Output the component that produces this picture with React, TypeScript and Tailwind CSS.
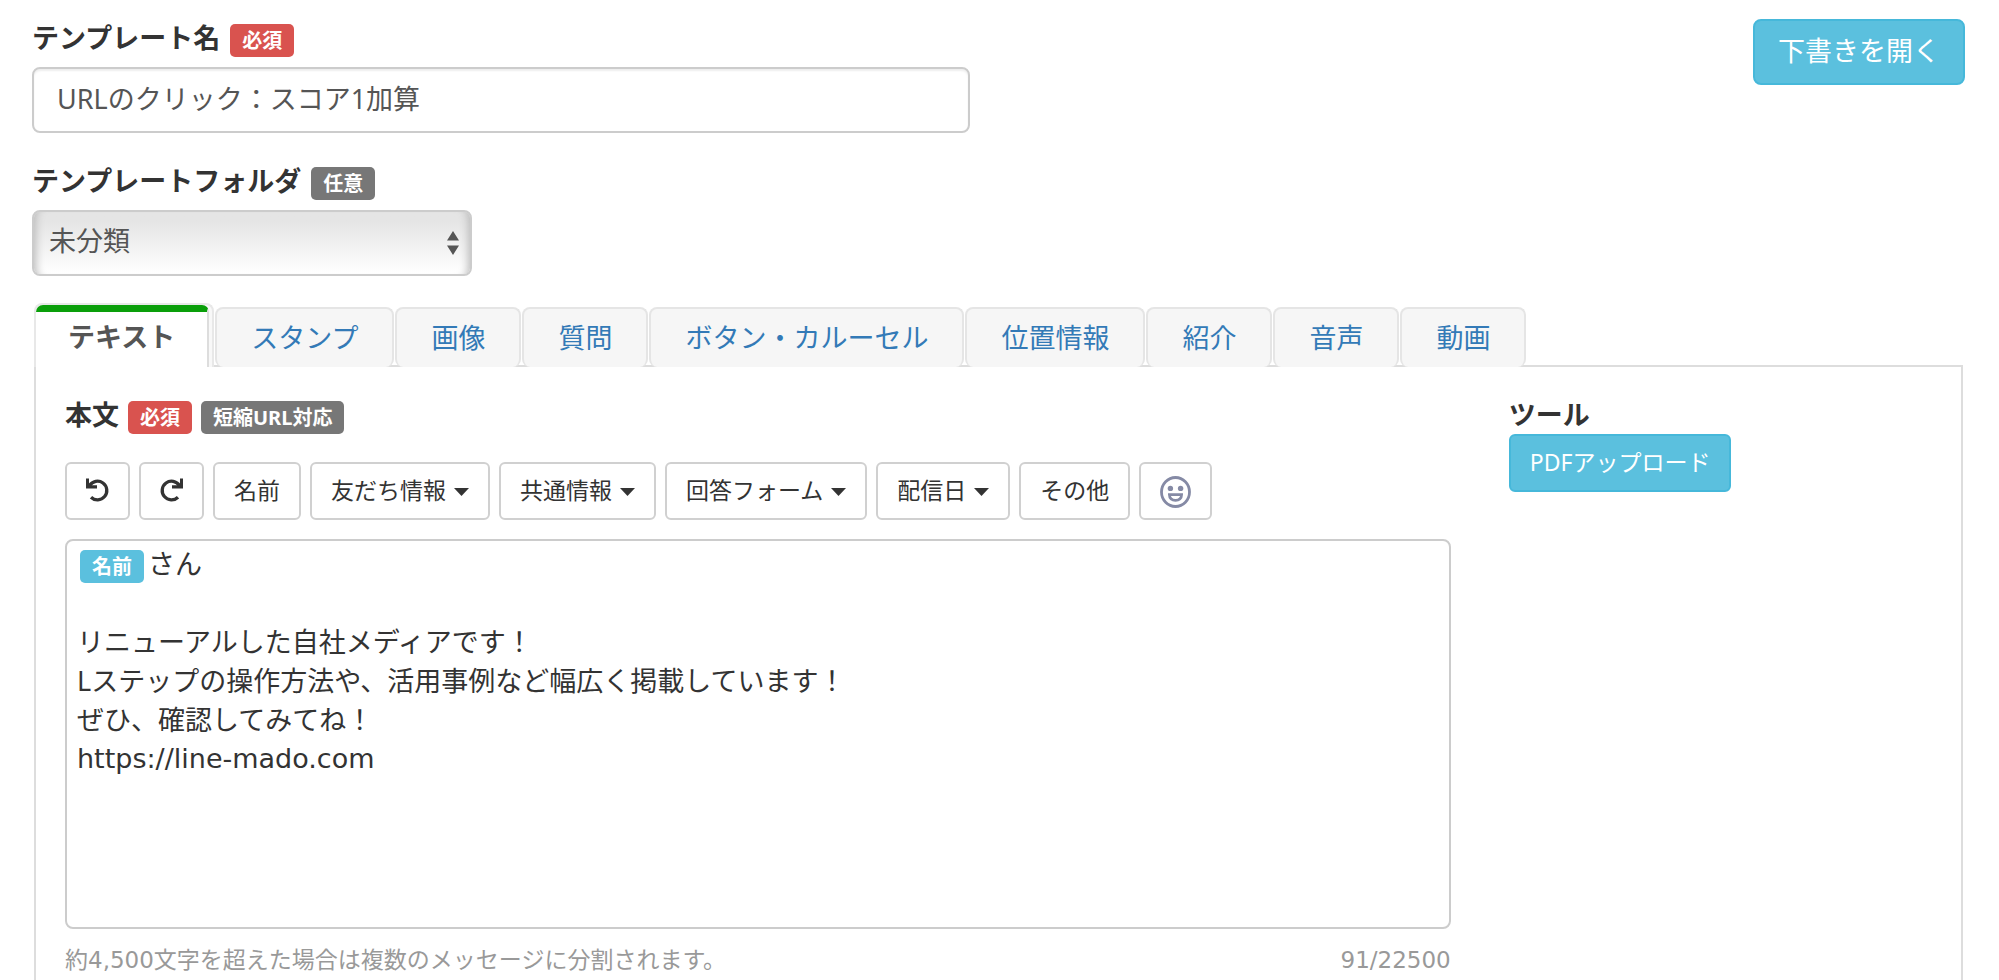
import { useState } from 'react';
import type { ReactNode } from 'react';

const TABS = [
  'テキスト',
  'スタンプ',
  '画像',
  '質問',
  'ボタン・カルーセル',
  '位置情報',
  '紹介',
  '音声',
  '動画',
];

const INSERT_BUTTONS: { label: string; menu: boolean }[] = [
  { label: '名前', menu: false },
  { label: '友だち情報', menu: true },
  { label: '共通情報', menu: true },
  { label: '回答フォーム', menu: true },
  { label: '配信日', menu: true },
  { label: 'その他', menu: false },
];

const BADGE_TONES = {
  danger: 'bg-[#d9534f]',
  muted: 'bg-[#777777]',
  info: 'bg-[#5bc0de]',
};

function Badge({ tone, children }: { tone: keyof typeof BADGE_TONES; children: ReactNode }) {
  return (
    <span
      className={`inline-block rounded-[5px] px-3 text-[20px] leading-[33px] font-bold text-white ${BADGE_TONES[tone]}`}
    >
      {children}
    </span>
  );
}

function ToolButton({ label, children }: { label?: string; children: ReactNode }) {
  return (
    <button
      type="button"
      aria-label={label}
      className="flex h-[58px] items-center gap-2 rounded-md border-2 border-[#d0d0d0] bg-white px-[19px] pb-[2px] text-[23px] leading-[32px] hover:bg-gray-100"
    >
      {children}
    </button>
  );
}

function Caret() {
  return (
    <svg width="15" height="8" viewBox="0 0 15 8" className="mt-1" aria-hidden="true">
      <path d="M0 0h15L7.5 8z" fill="#333" />
    </svg>
  );
}

function RotateIcon({ flip }: { flip?: boolean }) {
  return (
    <svg width="23" height="24" viewBox="0 0 23 24" className={flip ? '-scale-x-100' : ''} aria-hidden="true">
      <path d="M3.6 7.6A9.3 9.3 0 1 1 5 19.2" fill="none" stroke="#333" strokeWidth="3.3" />
      <path d="M0 .6h3v4.6l2.4 2H11v3.2H0z" fill="#333" />
    </svg>
  );
}

function SmileIcon() {
  return (
    <svg width="31" height="32" viewBox="0 0 31 32" className="mt-1" aria-hidden="true">
      <ellipse cx="15.5" cy="16" rx="14" ry="14.5" fill="none" stroke="#858aa5" strokeWidth="2.8" />
      <circle cx="10.4" cy="12.4" r="2.7" fill="#858aa5" />
      <circle cx="20.6" cy="12.4" r="2.7" fill="#858aa5" />
      <path d="M9.4 18.6h12.2c0 3.8-2.6 5.8-6.1 5.8s-6.1-2-6.1-5.8z" fill="none" stroke="#858aa5" strokeWidth="2.8" />
    </svg>
  );
}

export default function App() {
  const [name, setName] = useState('URLのクリック：スコア1加算');
  const [active, setActive] = useState(TABS[0]);

  return (
    <div className="flex min-h-screen flex-col bg-white pt-[19px] pr-[5px] pl-[3px] font-['Noto_Sans','Noto_Sans_CJK_JP',sans-serif] text-[27px] leading-[38px] text-[#333]">
      <div className="flex items-start justify-between">
        <div className="w-1/2 px-[29px]">
          <div className="mb-[10px] flex items-baseline gap-[10px]">
            <label htmlFor="template-name" className="font-bold">
              テンプレート名
            </label>
            <Badge tone="danger">必須</Badge>
          </div>
          <input
            id="template-name"
            type="text"
            value={name}
            onChange={(e) => setName(e.target.value)}
            className="block h-[66px] w-full rounded-lg border-2 border-[#ccc] bg-white px-[23px] pb-[6px] text-[#555] shadow-[inset_0_2px_2px_rgba(0,0,0,0.07)] outline-none"
          />
        </div>
        <div className="px-[29px]">
          <button
            type="button"
            className="h-[66px] rounded-lg border-2 border-[#46b8da] bg-[#5bc0de] px-[23px] pb-[2px] text-white hover:bg-[#31b0d5]"
          >
            下書きを開く
          </button>
        </div>
      </div>

      <div className="mt-[29px] px-[29px]">
        <div className="mb-[10px] flex items-baseline gap-[10px]">
          <label htmlFor="template-folder" className="font-bold">
            テンプレートフォルダ
          </label>
          <Badge tone="muted">任意</Badge>
        </div>
      </div>
      <div className="w-1/4 px-[29px]">
        <div className="relative">
          <select
            id="template-folder"
            className="block h-[66px] w-full appearance-none rounded-lg border-2 border-[#ccc] bg-linear-to-b from-[#e5e5e5] from-15% to-white px-[15px] pb-1 text-[#555] shadow-[inset_10px_0_8px_-8px_#bbb,inset_-10px_0_8px_-8px_#bbb] outline-none"
          >
            <option>未分類</option>
          </select>
          <svg
            width="12"
            height="24"
            viewBox="0 0 12 24"
            className="pointer-events-none absolute top-[21px] right-[13px]"
            aria-hidden="true"
          >
            <path d="M6 0l6 9.5H0zM0 14.5h12L6 24z" fill="#555" />
          </svg>
        </div>
      </div>

      <div className="mx-[31px] mt-[27px] flex grow flex-col">
        <div role="tablist" className="relative -mb-[2px] flex items-end gap-px">
          {TABS.map((tab) =>
            tab === active ? (
              <div key={tab} className="rounded-t-lg border-2 border-b-0 border-[#e8e8e8] bg-[#f8f8f8] pr-[3px]">
                <button
                  type="button"
                  role="tab"
                  aria-selected="true"
                  className="block h-[62px] rounded-t-[7px] border-t-[7px] border-r-2 border-t-[#0a9f0a] border-r-[#ddd] bg-white px-[32px] pb-[6px] font-bold text-[#555]"
                >
                  {tab}
                </button>
              </div>
            ) : (
              <button
                key={tab}
                type="button"
                role="tab"
                aria-selected="false"
                onClick={() => setActive(tab)}
                className="h-[60px] rounded-lg border-2 border-b-0 border-[#e5e5e5] bg-[#f6f6f6] px-[34px] text-[#337ab7]"
              >
                {tab}
              </button>
            ),
          )}
        </div>

        <div className="flex grow border-2 border-b-0 border-[#ddd]">
          <div className="w-3/4 px-[29px] pt-[29px]">
            <div className="flex items-baseline gap-[9px]">
              <span id="body-label" className="font-bold">
                本文
              </span>
              <Badge tone="danger">必須</Badge>
              <Badge tone="muted">短縮URL対応</Badge>
            </div>

            <div className="mt-[28px] flex flex-wrap gap-[9px]">
              <ToolButton label="元に戻す">
                <RotateIcon />
              </ToolButton>
              <ToolButton label="やり直す">
                <RotateIcon flip />
              </ToolButton>
              {INSERT_BUTTONS.map((b) => (
                <ToolButton key={b.label}>
                  {b.label}
                  {b.menu && <Caret />}
                </ToolButton>
              ))}
              <ToolButton label="絵文字">
                <SmileIcon />
              </ToolButton>
            </div>

            <div
              role="textbox"
              aria-multiline="true"
              aria-labelledby="body-label"
              contentEditable
              suppressContentEditableWarning
              className="mt-[19px] min-h-[390px] rounded-lg border-2 border-[#ccc] px-[10px] py-[3px] leading-[39px] outline-none"
            >
              <div className="flex items-baseline gap-1 pl-[3px]">
                <Badge tone="info">名前</Badge>
                <span>さん</span>
              </div>
              <div>
                <br />
              </div>
              <div>リニューアルした自社メディアです！</div>
              <div>Lステップの操作方法や、活用事例など幅広く掲載しています！</div>
              <div>ぜひ、確認してみてね！</div>
              <div className="font-['DejaVu_Sans',sans-serif]">https://line-mado.com</div>
            </div>

            <div className="mt-[12px] flex justify-between font-['DejaVu_Sans','Noto_Sans_CJK_JP',sans-serif] text-[23px] text-[#999]">
              <span>約4,500文字を超えた場合は複数のメッセージに分割されます。</span>
              <span>91/22500</span>
            </div>
          </div>

          <div className="w-1/4 px-[29px] pt-[29px]">
            <div className="font-bold">ツール</div>
            <button
              type="button"
              className="h-[58px] rounded-md border-2 border-[#46b8da] bg-[#5bc0de] px-[19px] pb-[2px] text-[23px] leading-[32px] text-white hover:bg-[#31b0d5]"
            >
              PDFアップロード
            </button>
          </div>
        </div>
      </div>
    </div>
  );
}
